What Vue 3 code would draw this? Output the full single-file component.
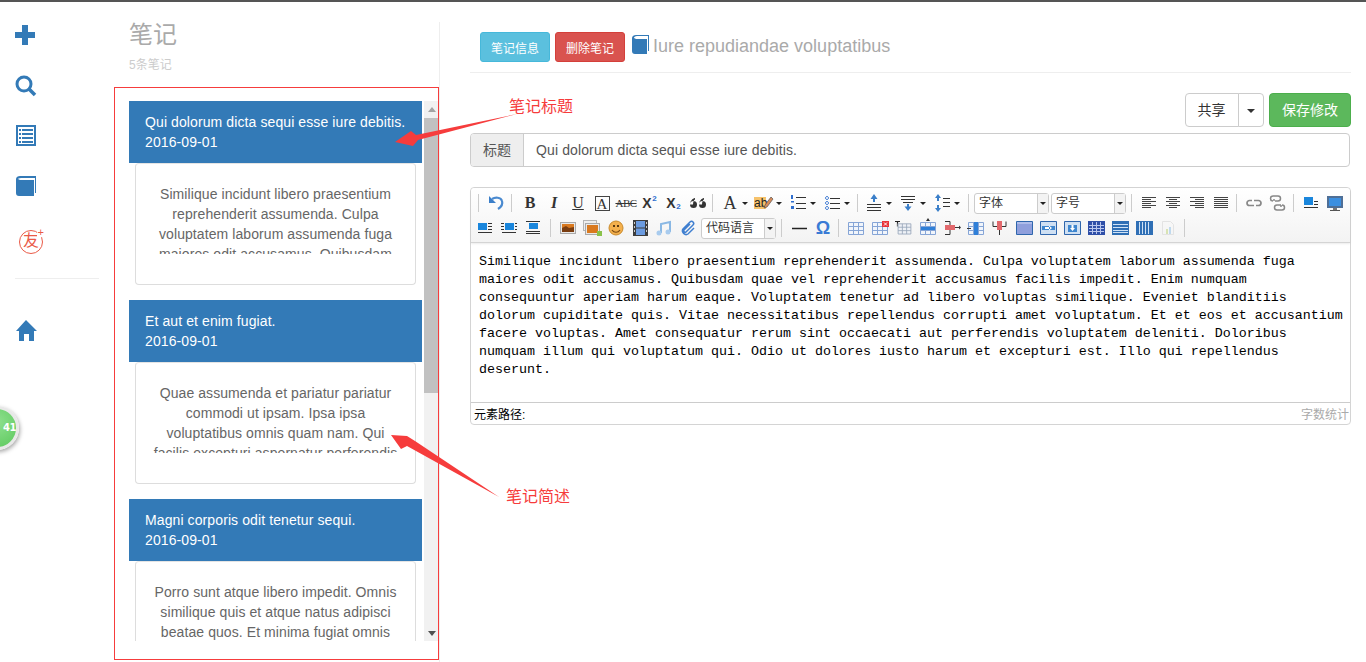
<script setup>
const s = (d, c = '#333', w = 1) => ({ d, stroke: c, 'stroke-width': w, fill: 'none' })
const f = (d, c) => ({ d, fill: c })

const grid = (fill = '#f1f5fb', line = '#86a5d6') => [
  f('M2 4h16v13H2z', fill),
  s('M2.5 4.5h15v12h-15zM2.5 8.5h15M2.5 12.5h15M7.5 4.5v12M12.5 4.5v12', line)
]
const headed = (fill, extra = []) => [
  f('M2 3h17v14H2z', '#dce6f5'),
  s('M2.5 3.5h16v13h-16z', '#2f66ac'),
  f('M3 4h15v12H3z', fill),
  ...extra
]
const lines = {
  left: s('M3 4.500h14M3 6.500h9M3 8.500h14M3 10.500h9M3 12.500h14M3 14.500h9', '#444'),
  center: s('M3 4.500h14M6 6.500h8M3 8.500h14M6 10.500h8M3 12.500h14M6 14.500h8', '#444'),
  right: s('M3 4.500h14M8 6.500h9M3 8.500h14M8 10.500h9M3 12.500h14M8 14.500h9', '#444'),
  justify: s('M3 4.500h14M3 6.500h14M3 8.500h14M3 10.500h14M3 12.500h14M3 14.500h14', '#444')
}
const picture = [
  f('M2 4h16v12H2z', '#a9a9a9'),
  f('M3 5h14v10H3z', '#e9e9e9'),
  f('M4 6h12v8H4z', '#d9791f'),
  f('M4 10l4-2 3 2 5-1v5H4z', '#7a3d10')
]
const sep = (ml = 3, mr = 5) => ({ t: 'sep', ml, mr })
const icon = (parts, split = false) => ({ t: 'btn', parts, split })
const txt = (label, cls, split = false) => ({ t: 'txt', label, cls, split })
const combo = (label, ml = 0) => ({ t: 'combo', label, ml })

const rowOne = [
  sep(0, 5),
  icon([f('M3 3v7h7z', '#3b7fc9'), s('M6 6c3-2 9-2 10 2 1 3-1 6-4 8', '#4a8ad0', 2.2)]),
  sep(3, 6),
  txt('B', 'tb'), txt('I', 'ti'), txt('U', 'tu'), txt('A', 'tbox'), txt('ABC', 'tabc'),
  { t: 'script', label: 'X', mark: '2', cls: 'sup' },
  { t: 'script', label: 'X', mark: '2', cls: 'sub' },
  icon([f('M2 11.500a3.500 3.500 0 1 0 7 0a3.500 3.500 0 0 0-7 0M2 11.500c0-3.500 2.500-6 5-6.500v1.500c-1 .5-2 2-2 5z', '#333'), f('M11 11.500a3.500 3.500 0 1 0 7 0a3.500 3.500 0 0 0-7 0M11 11.500c0-3.500 2.500-6 5-6.500v1.500c-1 .5-2 2-2 5z', '#333')]),
  sep(2, 5),
  txt('A', 'tcolor', true),
  { t: 'hl', split: true },
  icon([f('M3 2h2v4H3zM3 8h3v1.500H3zM3 13h3v3H3z', '#2f6fcf'), s('M8 4.500h10M8 10.500h10M8 15.500h10')], true),
  icon([s('M5 3.500a1.500 1.500 0 1 0 .01 0M5 8.500a1.500 1.500 0 1 0 .01 0M5 13.500a1.500 1.500 0 1 0 .01 0', '#2f6fcf'), s('M8 5.500h10M8 10.500h10M8 15.500h10')], true),
  sep(3, 4),
  icon([f('M10 1l3.500 5h-2.500v3H9V6H6.500z', '#3b7fc9'), s('M3 11.500h14M3 14.500h14M3 17.500h14')], true),
  icon([s('M3 3.500h14M3 6.500h14M5 9.500h10'), f('M10 18l-3.500-4.500H9V11h2v2.500h2.500z', '#3b7fc9')], true),
  icon([f('M6 1l3 4H7v3H5V5H3zM6 19l-3-4h2v-3h2v3h2z', '#3b7fc9'), s('M11 5.500h7M11 9.500h7M11 13.500h7')], true),
  sep(4, 5),
  combo('字体'), combo('字号', 2),
  sep(5, 5),
  icon([lines.left]), icon([lines.center]), icon([lines.right]), icon([lines.justify]),
  sep(3, 5),
  icon([s('M8 7.500H5.500a2.500 2.500 0 0 0 0 5H10M12 12.500h2.500a2.500 2.500 0 0 0 0-5H10', '#888', 1.7)]),
  icon([s('M5 3h5a2.500 2.500 0 0 1 0 5H7M6 6v2M14 17H9a2.500 2.500 0 0 1 0-5h4M13 12v2M5 3a2.500 2.500 0 0 0 0 5M14 12a2.500 2.500 0 0 1 0 5', '#888', 1.5)]),
  sep(3, 5),
  icon([f('M3 4h9v8H3z', '#1a86dc'), s('M3 14.500h14M13 8.500h4M13 11.500h4')]),
  icon([f('M2 3h16v12H2z', '#4f6f96'), f('M4 5h12v8H4z', '#3b8fe0'), f('M8 15h4v2H8z', '#777'), f('M5 17h10v1H5z', '#555')])
]

const rowTwo = [
  icon([f('M3 5h9v7H3z', '#1a86dc'), s('M13 5.500h4M13 8.500h4M13 11.500h4M3 14.500h14')]),
  icon([f('M6 5h9v7H6z', '#1a86dc'), s('M2 5.500h3M2 8.500h3M2 11.500h3M16 5.500h2M16 8.500h2M16 11.500h2M3 14.500h14')]),
  icon([f('M6 5h9v6H6z', '#1a86dc'), s('M3 3.500h14M3 13.500h14M3 15.500h14')]),
  sep(5, 5),
  icon(picture),
  icon([f('M1 2h14v11H1z', '#b5b5b5'), f('M2 3h12v9H2z', '#eee'), f('M3 5h15v12H3z', '#a9a9a9'), f('M4 6h13v10H4z', '#e9e9e9'), f('M5 7h11v8H5z', '#d9791f'), f('M15 13h5v5h-5z', '#8ac24a')]),
  icon([f('M3 10a7 7 0 1 0 14 0a7 7 0 0 0-14 0', '#f4b04d'), s('M3 10a7 7 0 1 0 14 0a7 7 0 0 0-14 0', '#c98a2b'), f('M7 7h2v2H7zM11 7h2v2h-2z', '#5c3a10'), s('M6 12c2 3 6 3 8 0', '#7b4a12', 1.2)]),
  icon([f('M3 2h15v16H3z', '#3d3d3d'), f('M6 3h9v6.500H6zM6 10.500h9V17H6z', '#6b9be0'), f('M4 4h1v2H4zM4 8h1v2H4zM4 12h1v2H4zM16 4h1v2h-1zM16 8h1v2h-1zM16 12h1v2h-1z', '#ccc')]),
  icon([s('M7 15V6l9-2v10', '#8ab8e4', 2), f('M2.500 15a2.500 2.500 0 1 0 5 0a2.500 2.500 0 0 0-5 0M11.500 14a2.500 2.500 0 1 0 5 0a2.500 2.500 0 0 0-5 0', '#a8cbee')]),
  icon([s('M16 10l-6 6c-3 2-7-2-5-5l7-7c2-2 5 1 3 3l-7 7c-1 1-3-1-2-2l6-6', '#3f7fd0', 1.5)]),
  combo('代码语言', 1),
  sep(5, 5),
  icon([s('M3 10.500h15', '#222', 1.5)]),
  txt('Ω', 'tomega'),
  sep(3, 5),
  icon(grid()),
  icon([...grid(), f('M12 3h7v6h-7z', '#e8333a'), s('M14 4.500l3 3M17 4.500l-3 3', '#fff')]),
  icon([s('M1 3.500h5M3.500 3.500v5', '#222', 1.2), ...grid('#eef1f6', '#9aa8bb').map(x => ({ ...x, transform: 'translate(2 2) scale(.85)' }))]),
  icon([...grid(), f('M3 9h14v3H3z', '#2f7fd8'), f('M10 0l2 3H8z', '#333')]),
  icon([s('M3 3.500h5v13H3', '#333'), f('M3 7h10v5H3z', '#e2686c'), s('M13 9.500h5', '#333'), f('M19 9.500l-2-2v4z', '#333')]),
  icon([...grid(), f('M8 4h4v13H8z', '#2f7fd8'), s('M1 10.500h4', '#333')]),
  icon([s('M3 3.500v5h13v-5', '#333'), f('M7 3h5v9H7z', '#e2686c'), s('M9.500 12v5', '#333')]),
  icon(headed('#8f9fdc', [f('M3 4h15v2H3z', '#aebcea')])),
  icon(headed('#cfe0f3', [f('M4 8h13v4H4z', '#3f87cf'), f('M14 10l-3-2.500v5zM7 9h5v2H7z', '#fff')])),
  icon(headed('#cfe0f3', [f('M6 7h9v7H6z', '#3f87cf'), f('M10.500 13l-2.500-3h5zM9.500 7h2v4h-2z', '#fff')])),
  icon([f('M2 3h17v14H2z', '#2f4fa8'), s('M3 7.500h15M3 10.500h15M3 13.500h15M6.500 4v12M10.500 4v12M14.500 4v12', '#b9c6ee')]),
  icon([f('M2 3h17v14H2z', '#2f6fb5'), s('M3 6.500h15M3 9.500h15M3 12.500h15M3 14.500h15', '#cfe2f6')]),
  icon([f('M2 3h17v14H2z', '#2f6fb5'), s('M5.500 4v12M8.500 4v12M11.500 4v12M14.500 4v12', '#cfe2f6')]),
  icon([s('M4.500 3.500h8l3 3v10h-11z', '#e3e3e3'), f('M8 11h2v5H8z', '#d8e3b3'), f('M11 9h2v7h-2z', '#bfd9ee')]),
  sep(4, 0)
]

const notes = [
  {
    title: 'Qui dolorum dicta sequi esse iure debitis.',
    body: 'Similique incidunt libero praesentium reprehenderit assumenda. Culpa voluptatem laborum assumenda fuga maiores odit accusamus. Quibusdam quae vel reprehenderit'
  },
  {
    title: 'Et aut et enim fugiat.',
    body: 'Quae assumenda et pariatur pariatur commodi ut ipsam. Ipsa ipsa voluptatibus omnis quam nam. Qui facilis excepturi aspernatur perferendis'
  },
  {
    title: 'Magni corporis odit tenetur sequi.',
    body: 'Porro sunt atque libero impedit. Omnis similique quis et atque natus adipisci beatae quos. Et minima fugiat omnis'
  }
]

const content = 'Similique incidunt libero praesentium reprehenderit assumenda. Culpa voluptatem laborum assumenda fuga maiores odit accusamus. Quibusdam quae vel reprehenderit accusamus facilis impedit. Enim numquam consequuntur aperiam harum eaque. Voluptatem tenetur ad libero voluptas similique. Eveniet blanditiis dolorum cupiditate quis. Vitae necessitatibus repellendus corrupti amet voluptatum. Et et eos et accusantium facere voluptas. Amet consequatur rerum sint occaecati aut perferendis voluptatem deleniti. Doloribus numquam illum qui voluptatum qui. Odio ut dolores iusto harum et excepturi est. Illo qui repellendus deserunt.'
</script>

<template>
  <div class="page">
    <nav class="nav">
      <div class="nav-item">
        <svg width="20" height="20" viewBox="0 0 20 20"><path d="M7 0h6v7h7v6h-7v7H7v-7H0V7h7z" fill="#337ab7" /></svg>
      </div>
      <div class="nav-item">
        <svg width="22" height="22" viewBox="0 0 22 22"><circle cx="9" cy="9" r="7" fill="none" stroke="#337ab7" stroke-width="3" /><path d="M14 14l6 6" stroke="#337ab7" stroke-width="3.500" /></svg>
      </div>
      <div class="nav-item shift">
        <svg width="20" height="21" viewBox="0 0 20 21"><path fill-rule="evenodd" d="M0 0h20v21H0zM2 2v17h16V2zM3 4h2v2H3zM6 4h11v2H6zM3 8h2v2H3zM6 8h11v2H6zM3 12h2v2H3zM6 12h11v2H6zM3 16h2v2H3zM6 16h11v2H6z" fill="#337ab7" /></svg>
      </div>
      <div class="nav-item shift">
        <svg width="20" height="22" viewBox="0 0 20 22"><path d="M0 4c0-2 2-3 4-3h16v17h-1V3H5C3 3 2 4 2 4l2 1h14v16H3c-2 0-3-1-3-3z" fill="#337ab7" /></svg>
      </div>
      <div class="nav-item friend-item">
        <div class="friend">友<span class="friend-plus">+</span></div>
      </div>
      <div class="nav-rule"></div>
      <div class="nav-home">
        <svg width="22" height="21" viewBox="0 0 22 21"><path d="M11 0l11 11h-3v10h-5v-7H9v7H4V11H1z" fill="#337ab7" /></svg>
      </div>
    </nav>

    <section class="notes">
      <h1 class="notes-title">笔记</h1>
      <div class="notes-count">5条笔记</div>
      <div class="notes-scroller">
        <div class="notes-list">
          <article v-for="note in notes" :key="note.title" class="note">
            <header class="note-head">
              <div>{{ note.title }}</div>
              <div>2016-09-01</div>
            </header>
            <div class="note-card">
              <p class="note-text">{{ note.body }}</p>
            </div>
          </article>
        </div>
        <div class="scrollbar">
          <span class="arrow-up"></span>
          <span class="thumb"></span>
          <span class="arrow-down"></span>
        </div>
      </div>
    </section>

    <main class="main">
      <div class="main-head">
        <button class="btn info">笔记信息</button>
        <button class="btn danger">删除笔记</button>
        <svg class="head-book" width="17" height="19" viewBox="0 0 17 19"><path d="M0 3c0-2 2-3 4-3h13v16h-1V1H5C3 1 2 2 2 3l2 1h11v15H3c-2 0-3-1-3-3z" fill="#337ab7" /></svg>
        <span class="head-title">Iure repudiandae voluptatibus</span>
      </div>

      <div class="actions">
        <div class="share">
          <button class="share-main">共享</button>
          <button class="share-caret"><span class="caret"></span></button>
        </div>
        <button class="save">保存修改</button>
      </div>

      <div class="title-group">
        <span class="title-addon">标题</span>
        <span class="title-input">Qui dolorum dicta sequi esse iure debitis.</span>
      </div>

      <div class="editor">
        <div class="toolbar">
          <div v-for="(row, r) in [rowOne, rowTwo]" :key="r" class="tool-row" :class="{ second: r === 1 }">
            <template v-for="(item, i) in row" :key="i">
              <span v-if="item.t === 'sep'" class="sep" :style="{ marginLeft: item.ml + 'px', marginRight: item.mr + 'px' }"></span>
              <span v-else-if="item.t === 'combo'" class="combo" :style="{ marginLeft: item.ml + 'px' }">
                <span class="combo-label">{{ item.label }}</span>
                <span class="combo-arrow"><span class="mini-caret"></span></span>
              </span>
              <span v-else class="tool" :class="{ split: item.split }">
                <span class="tool-face">
                  <svg v-if="item.t === 'btn'" width="20" height="20" viewBox="0 0 20 20">
                    <path v-for="(part, k) in item.parts" :key="k" v-bind="part" />
                  </svg>
                  <span v-else-if="item.t === 'txt'" :class="item.cls">{{ item.label }}</span>
                  <span v-else-if="item.t === 'script'" class="tscript">{{ item.label }}<span :class="item.cls">{{ item.mark }}</span></span>
                  <span v-else class="hl">
                    <span class="hl-text">ab</span>
                    <svg class="hl-pen" width="11" height="14" viewBox="0 0 11 14"><path d="M8 1l2 2-6 8-3 1 1-3z" fill="#d98c5a" stroke="#555" stroke-width=".7" /></svg>
                  </span>
                </span>
                <span v-if="item.split" class="mini-caret"></span>
              </span>
            </template>
          </div>
        </div>
        <div class="content">{{ content }}</div>
        <div class="status">
          <span>元素路径:</span>
          <span class="status-count">字数统计</span>
        </div>
      </div>
    </main>

    <div class="badge">41</div>
    <div class="red-frame"></div>
    <svg class="arrows" width="1366" height="662" viewBox="0 0 1366 662">
      <polygon points="517,114 416,135 411,131 395,142 413,146 418,140" fill="#f63c3c" />
      <polygon points="499,497 415,441 407,436 391,435 401,449 407,446" fill="#f63c3c" />
    </svg>
    <span class="label label-a">笔记标题</span>
    <span class="label label-b">笔记简述</span>
  </div>
</template>

<style scoped>
.page {
  position: relative;
  display: flex;
  height: 660px;
  border-top: 2px solid #555;
  overflow: hidden;
  background: #fff;
  font-family: "Liberation Sans", "Noto Sans CJK SC", sans-serif;
  font-size: 14px;
  color: #333;
}
.nav {
  flex: 0 0 114px;
  box-sizing: border-box;
  padding: 23px 15px 0;
}
.nav-item {
  height: 50px;
}
.shift {
  padding-left: 1px;
  box-sizing: border-box;
}
.friend-item {
  box-sizing: border-box;
  padding: 5px 0 0 4px;
}
.friend {
  position: relative;
  box-sizing: border-box;
  width: 24px;
  height: 24px;
  border: 1.5px solid #ea5a47;
  border-radius: 50%;
  color: #ea5a47;
  font-size: 16px;
  line-height: 20px;
  text-align: center;
}
.friend-plus {
  position: absolute;
  top: -3px;
  right: -3px;
  padding: 0 1px;
  background: #fff;
  font-size: 11px;
  line-height: 9px;
}
.nav-rule {
  height: 1px;
  margin: 3px 0 41px;
  background: #eee;
}
.notes {
  flex: 0 0 326px;
  box-sizing: border-box;
  margin-top: 20px;
  padding-left: 15px;
  border-right: 1px solid #eee;
}
.notes-title {
  margin: 0;
  color: #aaa;
  font-size: 24px;
  font-weight: 400;
  line-height: 26px;
}
.notes-count {
  margin-top: 8px;
  color: #ccc;
  font-size: 12px;
  line-height: 18px;
}
.notes-scroller {
  display: flex;
  height: 540px;
  margin-top: 27px;
}
.notes-list {
  flex: 0 0 293px;
  overflow: hidden;
}
.note {
  margin-bottom: 15px;
}
.note-head {
  box-sizing: border-box;
  height: 62px;
  padding: 11px 16px 0;
  background: #337ab7;
  color: #fff;
  letter-spacing: .1px;
  line-height: 20px;
}
.note-card {
  box-sizing: border-box;
  height: 122px;
  margin: 0 6px;
  padding: 20px 15px 0;
  border: 1px solid #ddd;
  border-top-color: #e4e4e4;
  border-radius: 4px;
  background: #fff;
}
.note-text {
  height: 70px;
  margin: 0;
  overflow: hidden;
  color: #666;
  letter-spacing: .08px;
  line-height: 20px;
  text-align: center;
}
.scrollbar {
  display: flex;
  flex-direction: column;
  box-sizing: border-box;
  flex: 0 0 15px;
  margin-left: 2px;
  background: #f1f1f1;
}
.arrow-up, .arrow-down {
  display: block;
  width: 0;
  height: 0;
  margin: 6px auto;
  border-left: 4px solid transparent;
  border-right: 4px solid transparent;
}
.arrow-up {
  border-bottom: 5px solid #a3a3a3;
}
.arrow-down {
  margin-top: auto;
  margin-bottom: 5px;
  border-top: 5px solid #505050;
}
.thumb {
  display: block;
  height: 275px;
  background: #c1c1c1;
}
.main {
  flex: 1;
  box-sizing: border-box;
  padding: 0 15px 0 30px;
}
.main-head {
  display: flex;
  align-items: center;
  height: 70px;
  padding: 0 0 0 10px;
  border-bottom: 1px solid #eee;
  box-sizing: content-box;
}
.btn {
  box-sizing: border-box;
  width: 70px;
  height: 30px;
  margin: 20px 5px 0 0;
  padding: 0;
  border: 1px solid;
  border-radius: 3px;
  color: #fff;
  font-family: inherit;
  font-size: 12px;
}
.info {
  background: #5bc0de;
  border-color: #46b8da;
}
.danger {
  margin-right: 7px;
  background: #d9534f;
  border-color: #d43f3a;
}
.head-book {
  margin: 14px 5px 0 0;
}
.head-title {
  margin: 18px 0 0 -1px;
  color: #aaa;
  font-size: 18px;
}
.actions {
  display: flex;
  justify-content: flex-end;
  gap: 5px;
  margin-top: 20px;
}
.share {
  display: flex;
}
.share-main, .share-caret, .save {
  box-sizing: border-box;
  height: 34px;
  font-family: inherit;
  font-size: 14px;
  line-height: 30px;
}
.share-main {
  width: 54px;
  padding: 0 1px 0 0;
  border: 1px solid #ccc;
  border-radius: 4px 0 0 4px;
  background: #fff;
  color: #333;
}
.share-caret {
  width: 26px;
  margin-left: -1px;
  padding: 0;
  border: 1px solid #ccc;
  border-radius: 0 4px 4px 0;
  background: #fff;
}
.caret {
  display: inline-block;
  border-left: 4px solid transparent;
  border-right: 4px solid transparent;
  border-top: 4px solid #333;
  vertical-align: middle;
}
.save {
  width: 82px;
  padding: 0;
  border: 1px solid #4cae4c;
  border-radius: 4px;
  background: #5cb85c;
  color: #fff;
}
.title-group {
  display: flex;
  width: 880px;
  height: 34px;
  margin-top: 6px;
  box-sizing: border-box;
  border: 1px solid #ccc;
  border-radius: 4px;
  line-height: 32px;
}
.title-addon {
  width: 53px;
  box-sizing: border-box;
  border-right: 1px solid #ccc;
  border-radius: 3px 0 0 3px;
  background: #eee;
  color: #555;
  text-align: center;
}
.title-input {
  padding-left: 12px;
  color: #555;
  letter-spacing: .12px;
}
.editor {
  box-sizing: border-box;
  width: 881px;
  height: 238px;
  margin-top: 20px;
  border: 1px solid #d4d4d4;
  border-radius: 4px;
}
.toolbar {
  box-sizing: border-box;
  height: 55px;
  padding: 3px 0 0 7px;
  border-bottom: 1px solid #d4d4d4;
  background: linear-gradient(#fff, #f3f3f3);
  box-shadow: 0 1px 2px rgba(0, 0, 0, .08);
  border-radius: 4px 4px 0 0;
}
.tool-row {
  display: flex;
  align-items: center;
  height: 24px;
}
.tool-row.second {
  margin-top: 1px;
  margin-left: -5px;
}
.sep {
  flex: none;
  width: 1px;
  height: 18px;
  background: #ccc;
}
.tool {
  display: flex;
  flex: none;
  align-items: center;
  width: 24px;
  height: 24px;
}
.tool.split {
  width: 34px;
}
.tool-face {
  display: flex;
  flex: none;
  align-items: center;
  justify-content: center;
  width: 24px;
  height: 24px;
}
.mini-caret {
  flex: none;
  display: block;
  width: 0;
  height: 0;
  margin-left: 0;
  border-left: 3px solid transparent;
  border-right: 3px solid transparent;
  border-top: 3px solid #222;
}
.tb, .ti, .tu, .tbox, .tcolor, .tabc {
  font-family: "Liberation Serif", serif;
  color: #333;
}
.tb {
  font-size: 16px;
  font-weight: 700;
}
.ti {
  font-size: 16px;
  font-style: italic;
  font-weight: 700;
}
.tu {
  font-size: 16px;
  font-weight: 400;
  text-decoration: underline;
}
.tbox {
  box-sizing: border-box;
  width: 15px;
  height: 15px;
  border: 1px solid #444;
  font-size: 15px;
  line-height: 14px;
  text-align: center;
}
.tcolor {
  font-size: 18px;
}
.tabc {
  font-size: 11px;
  letter-spacing: -.5px;
  text-decoration: line-through;
}
.tscript {
  position: relative;
  margin-right: 6px;
  font-size: 14px;
  font-weight: 700;
}
.sup, .sub {
  position: absolute;
  left: 10px;
  color: #2f6fcf;
  font-size: 8px;
  line-height: 8px;
}
.sup {
  top: 0;
}
.sub {
  bottom: 0;
}
.hl {
  position: relative;
  display: block;
  width: 20px;
  height: 14px;
}
.hl-text {
  display: block;
  width: 12px;
  background: #f6c26b;
  color: #222;
  font-size: 12px;
  line-height: 12px;
  margin-top: 1px;
}
.hl-pen {
  position: absolute;
  top: 0;
  right: 0;
}
.tomega {
  color: #3a7bd5;
  font-size: 18px;
  font-weight: 700;
}
.combo {
  display: flex;
  flex: none;
  box-sizing: border-box;
  width: 75px;
  height: 21px;
  border: 1px solid #ccc;
  border-radius: 3px;
  background: #fff;
  font-size: 12px;
  line-height: 19px;
}
.combo-label {
  flex: 1;
  padding-left: 4px;
  color: #333;
}
.combo-arrow {
  display: flex;
  align-items: center;
  justify-content: center;
  width: 10px;
  border-left: 1px solid #ccc;
  background: #f3f3f3;
}
.content {
  box-sizing: border-box;
  height: 159px;
  padding: 10px 5px 0 8px;
  color: #000;
  font-family: "Liberation Mono", monospace;
  font-size: 13.33px;
  line-height: 18px;
}
.status {
  display: flex;
  justify-content: space-between;
  box-sizing: border-box;
  height: 22px;
  padding: 2px 1px 0 3px;
  border-top: 1px solid #ccc;
  color: #000;
  font-size: 12px;
  line-height: 21px;
}
.status-count {
  color: #aaa;
}
.badge {
  position: absolute;
  top: 404px;
  left: -25px;
  box-sizing: border-box;
  width: 44px;
  height: 44px;
  padding-left: 25px;
  border: 3px solid #e8e8e8;
  border-radius: 50%;
  background: radial-gradient(circle at 50% 35%, #8ee08e, #5cc85c);
  box-shadow: 1px 2px 4px rgba(0, 0, 0, .35);
  color: #fff;
  font-family: "DejaVu Sans", sans-serif;
  font-size: 10px;
  font-weight: 700;
  line-height: 38px;
  letter-spacing: -.5px;
}
.red-frame {
  position: absolute;
  top: 85px;
  left: 114px;
  box-sizing: border-box;
  width: 325px;
  height: 573px;
  border: 1px solid #f63c3c;
}
.arrows {
  position: absolute;
  top: -2px;
  left: 0;
  pointer-events: none;
}
.label {
  position: absolute;
  color: #f63c3c;
  font-size: 16px;
  line-height: 20px;
}
.label-a {
  top: 95px;
  left: 509px;
}
.label-b {
  top: 485px;
  left: 506px;
}
</style>

<style>
html, body {
  margin: 0;
  overflow: hidden;
}
</style>
